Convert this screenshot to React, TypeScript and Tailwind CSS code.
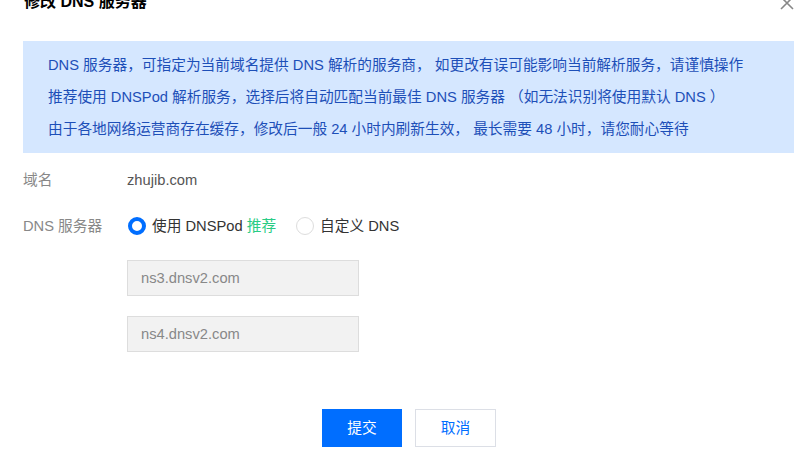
import { useState } from "react";

const font = { fontFamily: '"Liberation Sans", "Noto Sans CJK SC", sans-serif' };

export default function App() {
  const [method, setMethod] = useState<"dnspod" | "custom">("dnspod");

  return (
    <div className="w-[804px] h-[474px] bg-white overflow-hidden" style={font}>
      <div className="flex items-start justify-between pl-[24px] pr-[10px]">
        <h2 className="mt-[-10px] text-[16px] leading-[24px] font-bold text-[#000]">
          修改 DNS 服务器
        </h2>
        <svg
          width="14"
          height="14"
          viewBox="0 0 14 14"
          className="mt-[-4px] text-[#888]"
          stroke="currentColor"
          strokeWidth="1.6"
        >
          <path d="M1 1 L13 13 M13 1 L1 13" />
        </svg>
      </div>

      <div className="pl-[23px] pr-[10px] mt-[27px]">
        <div className="bg-[#d5e7ff] pl-[25px] py-[8px] text-[14.7px] leading-[32px] text-[#1d4fb8]">
          <p>DNS 服务器，可指定为当前域名提供 DNS 解析的服务商， 如更改有误可能影响当前解析服务，请谨慎操作</p>
          <p>推荐使用 DNSPod 解析服务，选择后将自动匹配当前最佳 DNS 服务器 （如无法识别将使用默认 DNS ）</p>
          <p>由于各地网络运营商存在缓存，修改后一般 24 小时内刷新生效， 最长需要 48 小时，请您耐心等待</p>
        </div>

        <div className="flex items-center h-[32px] mt-[11px] text-[14.7px]">
          <span className="w-[104px] text-[#888]">域名</span>
          <span className="text-[#555]">zhujib.com</span>
        </div>

        <div className="flex items-center h-[32px] mt-[14px] text-[14.7px]">
          <span className="w-[104px] text-[#888]">DNS 服务器</span>
          <label
            className="flex items-center gap-[6px] ml-[1px] cursor-pointer text-[#333]"
            onClick={() => setMethod("dnspod")}
          >
            <span
              className={
                method === "dnspod"
                  ? "w-[18px] h-[18px] rounded-full border-[4px] border-[#006eff] bg-white"
                  : "w-[18px] h-[18px] rounded-full border border-[#ddd] bg-white"
              }
            />
            <span>
              使用 DNSPod <span className="text-[#29cc85]">推荐</span>
            </span>
          </label>
          <label
            className="flex items-center gap-[6px] ml-[20px] cursor-pointer text-[#333]"
            onClick={() => setMethod("custom")}
          >
            <span
              className={
                method === "custom"
                  ? "w-[18px] h-[18px] rounded-full border-[4px] border-[#006eff] bg-white"
                  : "w-[18px] h-[18px] rounded-full border border-[#ddd] bg-white"
              }
            />
            <span>自定义 DNS</span>
          </label>
        </div>

        <div className="flex flex-col gap-[20px] ml-[104px] mt-[18px]">
          <div className="w-[232px] h-[36px] bg-[#f2f2f2] border border-[#ddd] flex items-center pl-[13px] text-[14.7px] text-[#888]">
            ns3.dnsv2.com
          </div>
          <div className="w-[232px] h-[36px] bg-[#f2f2f2] border border-[#ddd] flex items-center pl-[13px] text-[14.7px] text-[#888]">
            ns4.dnsv2.com
          </div>
        </div>
      </div>

      <div className="flex justify-center gap-[13px] mt-[57px] pl-[14px]">
        <button className="w-[80px] h-[38px] bg-[#006eff] text-white text-[14.7px]">提交</button>
        <button className="w-[81px] h-[38px] bg-white border border-[#dcdfe6] text-[#006eff] text-[14.7px]">
          取消
        </button>
      </div>
    </div>
  );
}
